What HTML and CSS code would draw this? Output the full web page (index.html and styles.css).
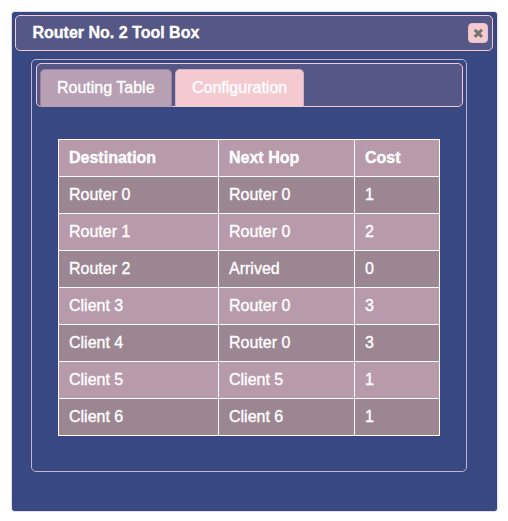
FILE: index.html
```html
<!DOCTYPE html>
<html lang="en">
<head>
<meta charset="utf-8">
<title>Router No. 2 Tool Box</title>
<link rel="stylesheet" href="styles.css">
</head>
<body>
<div class="dialog">
  <div class="titlebar">
    <span class="title">Router No. 2 Tool Box</span>
    <button class="close" aria-label="Close">
      <svg width="10" height="10" viewBox="0 0 10 10"><path d="M1.7 1.7L8.9 8.9M8.9 1.7L1.7 8.9"/></svg>
    </button>
  </div>
  <div class="tabs">
    <div class="nav">
      <a class="tab visited">Routing Table</a>
      <a class="tab config">Configuration</a>
    </div>
    <div class="panel">
      <table>
        <colgroup><col class="dest"><col class="hop"><col class="cost"></colgroup>
        <tr><th>Destination</th><th>Next Hop</th><th>Cost</th></tr>
        <tr><td>Router 0</td><td>Router 0</td><td>1</td></tr>
        <tr><td>Router 1</td><td>Router 0</td><td>2</td></tr>
        <tr><td>Router 2</td><td>Arrived</td><td>0</td></tr>
        <tr><td>Client 3</td><td>Router 0</td><td>3</td></tr>
        <tr><td>Client 4</td><td>Router 0</td><td>3</td></tr>
        <tr><td>Client 5</td><td>Client 5</td><td>1</td></tr>
        <tr><td>Client 6</td><td>Client 6</td><td>1</td></tr>
      </table>
    </div>
  </div>
</div>
</body>
</html>
```
FILE: styles.css
```css
* { box-sizing: border-box; }
body {
  margin: 0;
  padding: 11px;
  background: #fff;
  color: #fff;
  font: 16px/18px "Liberation Sans", Arial, sans-serif;
  -webkit-text-stroke: 0.35px #fff;
}
.dialog {
  width: 487px;
  height: 501px;
  padding: 3px;
  border: 1px solid #e3dfe9;
  border-radius: 3px;
  background: #374883;
  background-clip: padding-box;
}
.titlebar {
  display: flex;
  align-items: center;
  justify-content: space-between;
  width: 478px;
  height: 36px;
  padding: 0 4px 0 16.5px;
  border: 1px solid #f4cad0;
  border-radius: 5px;
  background: #555887;
}
.title { font-weight: bold; margin-top: -1px; }
.close {
  display: flex;
  align-items: center;
  justify-content: center;
  width: 20px;
  height: 20px;
  padding: 0;
  border: 1px solid #e6bfca;
  border-radius: 4px;
  background: #f4cad0;
}
.close svg { fill: none; stroke: #73756f; stroke-width: 3; }
.tabs {
  width: 436px;
  height: 413px;
  margin: 8px 0 0 16px;
  padding: 3px 3px 3px 4px;
  border: 1px solid #c8b3cb;
  border-radius: 5px;
}
.nav {
  display: flex;
  align-items: flex-end;
  gap: 3px;
  height: 44px;
  padding-left: 3px;
  border: 1px solid #f4cad0;
  border-radius: 5px;
  background: #555887;
}
.tab {
  height: 38px;
  padding: 9px 15px 0 16px;
  margin-bottom: -1px;
  border: 1px solid #a0809f;
  border-bottom: 0;
  border-radius: 5px 5px 0 0;
  background: #b7a0b4;
}
.visited { width: 132px; }
.config {
  width: 129px;
  border-color: #d3b3c3;
  background: #f4cad0;
}
.panel { padding: 32px 0 0 22px; }
table {
  width: 382px;
  table-layout: fixed;
  border-collapse: collapse;
}
.dest { width: 160px; }
.hop { width: 136px; }
.cost { width: 85px; }
th, td {
  height: 37px;
  padding: 0 10px;
  border: 1px solid #fff;
  text-align: left;
}
tr:nth-child(odd) { background: #b89bab; }
tr:nth-child(even) { background: #9c8692; }
```
